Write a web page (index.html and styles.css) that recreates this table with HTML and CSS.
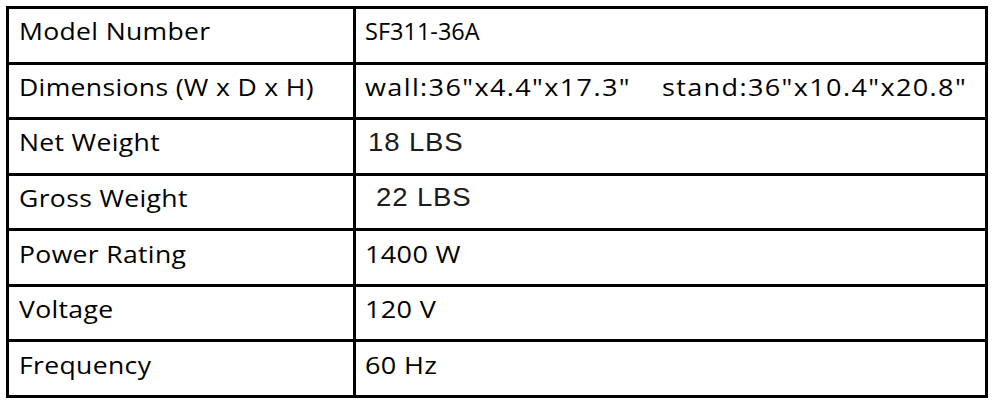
FILE: index.html
```html
<!DOCTYPE html>
<html lang="en">
<head>
<meta charset="utf-8">
<title>Specifications</title>
<link rel="stylesheet" href="styles.css">
</head>
<body>
<div class="spec">
  <div class="cell label"><span class="t">Model Number</span></div>
  <div class="cell value model"><span class="t">SF311-36A</span></div>
  <div class="cell label"><span class="t">Dimensions (W x D x H)</span></div>
  <div class="cell value dims"><span class="t">wall:36"x4.4"x17.3"<span class="stand">stand:36"x10.4"x20.8"</span></span></div>
  <div class="cell label"><span class="t">Net Weight</span></div>
  <div class="cell value arial"><span class="t">18 LBS</span></div>
  <div class="cell label"><span class="t">Gross Weight</span></div>
  <div class="cell value arial indent"><span class="t">22 LBS</span></div>
  <div class="cell label"><span class="t">Power Rating</span></div>
  <div class="cell value"><span class="t">1400 W</span></div>
  <div class="cell label"><span class="t">Voltage</span></div>
  <div class="cell value"><span class="t">120 V</span></div>
  <div class="cell label"><span class="t">Frequency</span></div>
  <div class="cell value"><span class="t">60 Hz</span></div>
</div>
</body>
</html>
```

FILE: styles.css
```css
html, body {
  margin: 0;
  padding: 0;
  background: #fff;
}
body {
  padding: 6px 4px 4px 6px;
}
.spec {
  display: grid;
  grid-template-columns: 344px 629px;
  grid-template-rows: repeat(7, 1fr);
  gap: 3px;
  padding: 3px;
  background: #000;
  width: 982px;
  height: 392px;
  box-sizing: border-box;
}
.cell {
  background: #fff;
  display: flex;
  align-items: center;
  padding: 0 0 8px 10px;
  font-family: "Open Sans", "Noto Sans", sans-serif;
  font-size: 23.5px;
  letter-spacing: 0.3px;
  color: #000;
  white-space: pre;
}
.t {
  display: inline-block;
  transform: scaleX(1.13);
  transform-origin: left center;
}
.value {
  padding-left: 9px;
}
.value .t {
  transform: scaleX(1.15);
}
.model {
  letter-spacing: 0;
}
.model .t {
  transform: none;
}
.dims {
  letter-spacing: 1.2px;
}
.stand {
  margin-left: 27px;
}
.arial {
  font-family: "Liberation Sans", Arial, sans-serif;
  font-size: 25.5px;
  letter-spacing: 0.8px;
  color: #1c1c1c;
  padding-left: 12px;
}
.arial .t {
  transform: scaleX(1.08);
}
.indent {
  padding-left: 20px;
}
```
